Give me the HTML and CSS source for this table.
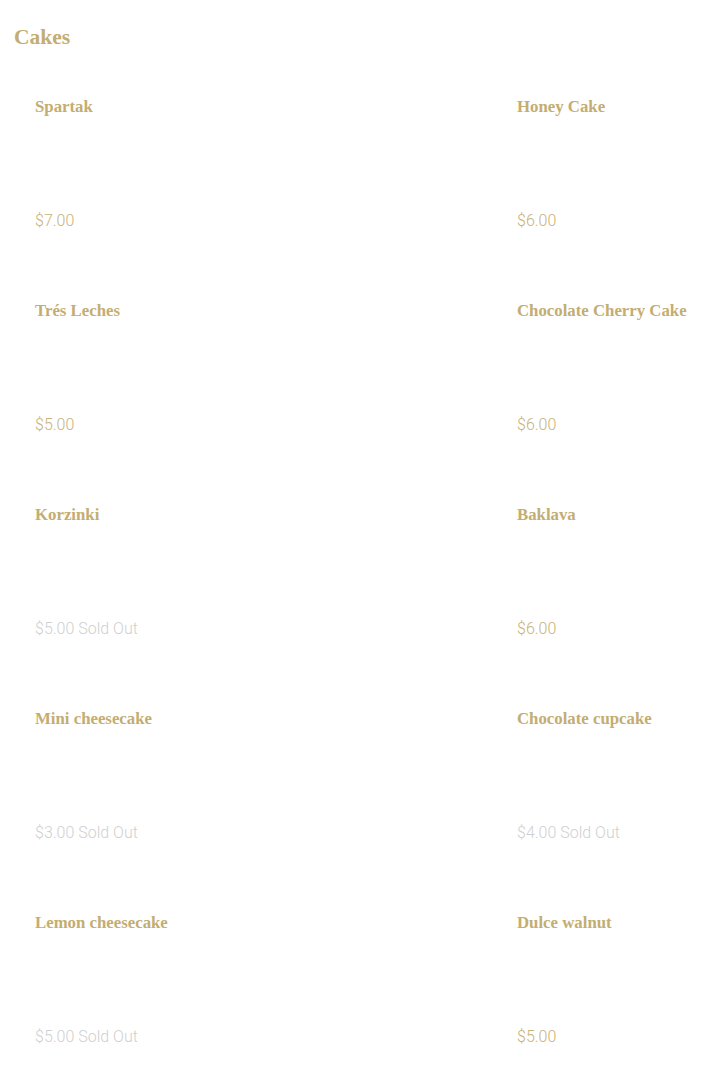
FILE: index.html
```html
<!DOCTYPE html>
<html lang="en">
<head>
<meta charset="utf-8">
<title>Cakes</title>
<link rel="stylesheet" href="styles.css">
</head>
<body>
<section class="menu-section">
  <h2 class="section-title">Cakes</h2>
  <div class="items">
    <div class="item"><h3 class="item-name">Spartak</h3><div class="item-price">$7.00</div></div>
    <div class="item"><h3 class="item-name">Honey Cake</h3><div class="item-price">$6.00</div></div>
    <div class="item"><h3 class="item-name">Trés Leches</h3><div class="item-price">$5.00</div></div>
    <div class="item"><h3 class="item-name">Chocolate Cherry Cake</h3><div class="item-price">$6.00</div></div>
    <div class="item"><h3 class="item-name">Korzinki</h3><div class="item-price sold-out">$5.00 Sold Out</div></div>
    <div class="item"><h3 class="item-name">Baklava</h3><div class="item-price">$6.00</div></div>
    <div class="item"><h3 class="item-name">Mini cheesecake</h3><div class="item-price sold-out">$3.00 Sold Out</div></div>
    <div class="item"><h3 class="item-name">Chocolate cupcake</h3><div class="item-price sold-out">$4.00 Sold Out</div></div>
    <div class="item"><h3 class="item-name">Lemon cheesecake</h3><div class="item-price sold-out">$5.00 Sold Out</div></div>
    <div class="item"><h3 class="item-name">Dulce walnut</h3><div class="item-price">$5.00</div></div>
  </div>
</section>
</body>
</html>
```

FILE: styles.css
```css
html, body {
  margin: 0;
  padding: 0;
  background: #ffffff;
}

.menu-section {
  padding: 22px 14px 0 14px;
}

.section-title {
  margin: 0;
  font-family: "Liberation Serif", "DejaVu Serif", serif;
  font-weight: 700;
  font-size: 21.5px;
  line-height: 30px;
  color: #c3ad71;
}

.items {
  display: grid;
  grid-template-columns: 482px 1fr;
  row-gap: 66px;
  padding-left: 21px;
  margin-top: 43px;
}

.item-name {
  margin: 0 0 90px 0;
  font-family: "Liberation Serif", "DejaVu Serif", serif;
  font-weight: 700;
  font-size: 16.8px;
  line-height: 24px;
  color: #c3ad71;
  white-space: nowrap;
}

.item-price {
  font-family: Roboto, "Liberation Sans", sans-serif;
  font-weight: 300;
  font-size: 16px;
  line-height: 24px;
  color: #c6b27a;
}

.item-price.sold-out {
  color: #d0d0d0;
}
```
